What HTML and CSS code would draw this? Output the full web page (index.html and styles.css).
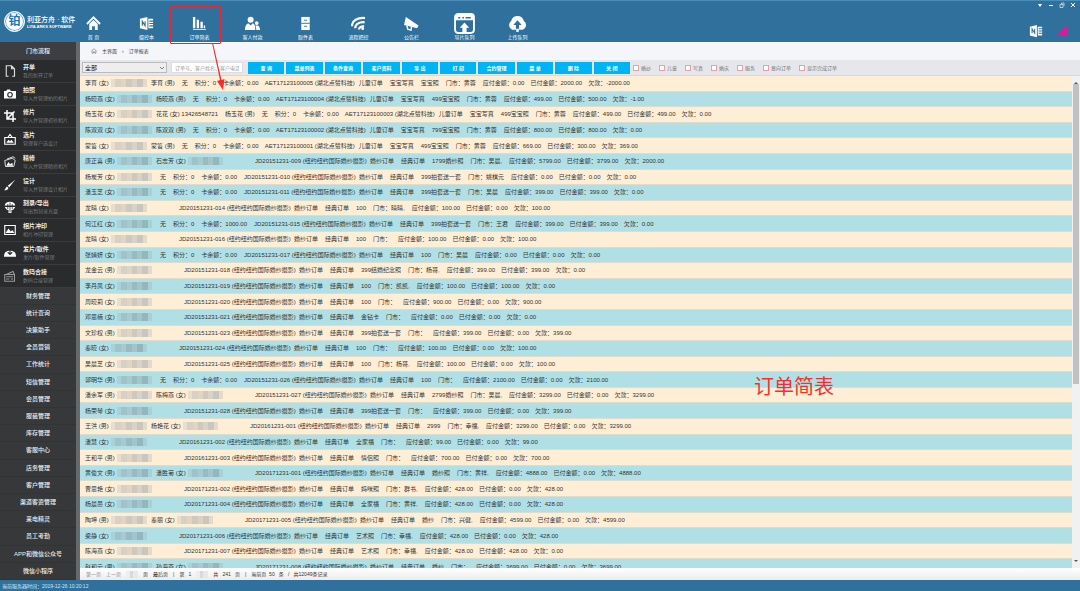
FILE: index.html
```html
<!DOCTYPE html>
<html lang="zh-CN">
<head>
<meta charset="utf-8">
<title>订单简表</title>
<link rel="stylesheet" href="styles.css">
</head>
<body>
<header class="topbar">
  <div class="brand">
    <span class="logo">铂</span>
    <div class="brand-text"><strong>利亚方舟 · 软件</strong><small>LIYA ARKS SOFTWARE</small></div>
  </div>
  <nav class="mainnav">
    <a href="#"><svg viewBox="0 0 16 16"><path d="M1 8.500 8 1.500l7 7" fill="none" stroke="#fff" stroke-width="2"/><path d="M3.500 8.500 8 4.200l4.500 4.300V15h-3v-4h-3v4h-3z" fill="#fff"/></svg>首 页</a>
    <a href="#"><svg viewBox="0 0 16 16"><path d="M1 3 9 1v14l-8-2zM10 3h5v10h-5z" fill="#fff"/><path d="M3.500 10.500v-5l3 5v-5M11 5.500h4M11 8h4M11 10.500h4" fill="none" stroke="#2f719c" stroke-width="1.200"/></svg>摄控本</a>
    <a href="#"><svg viewBox="0 0 16 16"><path d="M1 1h2.500v12H1zM5 4h2.500v9H5zM9 6h2.500v7H9zM12.500 10H14v3h-1.500zM1 14h14v1H1z" fill="#fff"/></svg>订单简表</a>
    <a href="#"><svg viewBox="0 0 16 16"><circle cx="6" cy="4" r="3.200" fill="#fff"/><path d="M0 15c0-5 2-7 4-7l2 2 2-2c2 0 3 2 3 7z" fill="#fff"/><circle cx="12.500" cy="7.500" r="2" fill="#fff"/><path d="M12 15c0-2-.3-3.500-1-5h2c2 0 3 2 3 5z" fill="#fff"/></svg>客人付款</a>
    <a href="#"><svg viewBox="0 0 16 16"><path d="M3.500 1h9v14h-9z" fill="#fff"/><path d="M3.500 7.800h9M6.500 4.500h3M6.500 11h3" stroke="#2f719c" stroke-width="1"/></svg>取件表</a>
    <a href="#"><svg viewBox="0 0 16 16"><g fill="none" stroke="#fff" stroke-width="2.400"><path d="M1 11C1 5 7 1.500 15 2.200M4.500 13c0-4 4-7 10-6.300M8.500 14.500c0-2 2-3.800 5.500-3.500"/></g><circle cx="12.500" cy="13.500" r="1.500" fill="#fff"/></svg>流程把控</a>
    <a href="#"><svg viewBox="0 0 16 16"><path d="M2 1 15.500 10l-1.500 3L0 9.500z" fill="#fff"/><path d="m3 10 1 4 3.500 1 .5-3.500" fill="none" stroke="#fff" stroke-width="1.500"/></svg>公告栏</a>
    <a href="#"><svg class="big" viewBox="0 0 20 20"><rect x="1" y="1" width="18" height="18" rx="3" fill="none" stroke="#fff" stroke-width="1.800"/><path d="M1 2h18v5H1zM10 9l4.500 5H12v5H8v-5H5.500z" fill="#fff"/><path d="M4 4.500h2M8 4.500h1.500M11 4.500h5" stroke="#2f719c" stroke-width="1.300"/></svg>导片队列</a>
    <a href="#"><svg class="big" viewBox="0 0 20 20"><path d="M5 16a5 5 0 0 1-1-8.500 6.200 6.200 0 0 1 12 0A4.800 4.800 0 0 1 15 16z" fill="#fff"/><path d="m10 7 4 4.500h-2.500V18h-3v-6.500H6z" fill="#2f719c"/><path d="M8.800 15h2.400v3H8.800z" fill="#fff"/></svg>上传队列</a>
  </nav>
  <div class="corner">
    <div class="window-buttons">
      <button aria-label="菜单"><svg viewBox="0 0 6 6"><path d="M1 2h4L3 5z" fill="#fff"/></svg></button>
      <button aria-label="最小化"><svg viewBox="0 0 6 6"><path d="M1 3.500h4" stroke="#fff"/></svg></button>
      <button aria-label="还原"><svg viewBox="0 0 6 6"><path d="M1 2.500h3v3H1zM2.500 2V1H5v3" fill="none" stroke="#cfe0ec" stroke-width=".8"/></svg></button>
      <button aria-label="关闭"><svg viewBox="0 0 6 6"><path d="m1 1 4 4m0-4L1 5" stroke="#fff"/></svg></button>
    </div>
    <div class="shortcuts">
      <a href="#" aria-label="笔记"><svg viewBox="0 0 16 16"><path d="M1 3 9 1v14l-8-2zM10 3h5v10h-5z" fill="#fff"/><path d="M3.500 10.500v-5l3 5v-5M11 5.500h4M11 8h4M11 10.500h4" fill="none" stroke="#2f719c" stroke-width="1.200"/></svg></a>
      <a href="#" aria-label="发送"><svg viewBox="0 0 16 16"><path d="M14 2 8 5 1 13l4-1 1 2 3-3 1 3 4-1-1-4z" fill="#e01a97"/></svg></a>
    </div>
  </div>
</header>

<div class="body">
  <aside class="sidebar">
    <h2>门市流程</h2>
    <ul class="steps">
      <li><a href="#"><svg viewBox="0 0 16 16"><path d="M6 15H3V1h7l4 4v10h-3M10 1v4h4" fill="none" stroke="#ddd" stroke-width="1.500"/></svg><span><b>开单</b><small>我的新开订单</small></span></a></li>
      <li><a href="#"><svg viewBox="0 0 16 16"><path d="M0 4h3l1-2h4l1 2h7v10H0z" fill="#fff"/><circle cx="8" cy="9" r="3" fill="none" stroke="#292b2d" stroke-width="1.500"/></svg><span><b>拍照</b><small>导入并管理拍的相片</small></span></a></li>
      <li><a href="#"><svg viewBox="0 0 16 16"><path d="M4 0v12h12M0 4h12v12M5 11l9-9" fill="none" stroke="#fff" stroke-width="2"/></svg><span><b>修片</b><small>导入并管理初修相片</small></span></a></li>
      <li><a href="#"><svg viewBox="0 0 16 16"><path d="M1 6h14v9H1zM5 6l3-4 3 4" fill="none" stroke="#fff" stroke-width="1.500"/><path d="m3 13 3-4 2 2 2-2 3 4z" fill="#fff"/></svg><span><b>选片</b><small>管理客户选设计</small></span></a></li>
      <li><a href="#"><svg viewBox="0 0 16 16"><path d="m1 6 10-3 4 3-2 8H2zM4 4l8-3 3 2" fill="none" stroke="#ddd" stroke-width="1.300"/><path d="m3 13 3-5 2 3 3-2 1 4z" fill="#fff"/></svg><span><b>精修</b><small>导入并管理精修相片</small></span></a></li>
      <li><a href="#"><svg viewBox="0 0 16 16"><path d="M15 1 7 11l-2-2zM4 10l2 2c-1 3-3 3-6 3 2-1 2-4 4-5z" fill="#fff"/></svg><span><b>设计</b><small>导入并管理设计相片</small></span></a></li>
      <li><a href="#"><svg viewBox="0 0 16 16"><path d="M1 6a7 5 0 0 1 14 0zM1 8h14l-3 4H4zM6 11h4v5H6z" fill="#fff"/><path d="M8 2v13M5 4v7M11 4v7" stroke="#292b2d"/></svg><span><b>刻录/导出</b><small>导出到刻录光盘</small></span></a></li>
      <li><a href="#"><svg viewBox="0 0 16 16"><path d="M1 2h14v12H1z" fill="none" stroke="#fff" stroke-width="1.500"/><path d="m2 12 4-6 3 4 2-2 3 4z" fill="#fff"/></svg><span><b>相片冲印</b><small>相片冲印管理</small></span></a></li>
      <li><a href="#"><svg viewBox="0 0 16 16"><path d="M0 13c0-6 3-8 8-8s8 2 8 8z" fill="#fff"/><path d="M8 3v7M5 7l3 3 3-3" fill="none" stroke="#292b2d" stroke-width="1.500"/></svg><span><b>发片/取件</b><small>发片/取件管理</small></span></a></li>
      <li><a href="#"><svg viewBox="0 0 16 16"><path d="M1 6h13v9H1zM3 6l9-4 2 4M3 9h9M3 12h4m2 0h3" fill="none" stroke="#999" stroke-width="1.400"/></svg><span><b>数码合接</b><small>数码合接管理</small></span></a></li>
    </ul>
    <ul class="links">
      <li><a href="#">财务管理</a></li><li><a href="#">统计查询</a></li><li><a href="#">决策助手</a></li><li><a href="#">全员营销</a></li><li><a href="#">工作统计</a></li><li><a href="#">短信管理</a></li><li><a href="#">会员管理</a></li><li><a href="#">服装管理</a></li><li><a href="#">库存管理</a></li><li><a href="#">客服中心</a></li><li><a href="#">店务管理</a></li><li><a href="#">客户管理</a></li><li><a href="#">渠道客资管理</a></li><li><a href="#">来电精灵</a></li><li><a href="#">员工考勤</a></li><li><a href="#">APP和微信公众号</a></li><li><a href="#">微信小程序</a></li>
    </ul>
  </aside>

  <main class="content">
    <nav class="crumbs"><svg viewBox="0 0 16 16"><path d="m1 8 7-6 7 6M3 7v7h3v-4h4v4h3V7" fill="none" stroke="#555" stroke-width="1.300"/></svg><a href="#">主界面</a><span>›</span><a href="#">订单报表</a></nav>
    <form class="toolbar">
      <div class="picker">
        <select aria-label="范围"><option>全部</option></select>
        <svg viewBox="0 0 6 6"><path d="m1 2 2 2 2-2" fill="none" stroke="#666" stroke-width=".8"/></svg>
      </div>
      <input type="text" aria-label="搜索" placeholder="订单号、客户姓名、客户电话">
      <div class="actions">
        <button type="button">查 询</button><button type="button">菜单列表</button><button type="button">条件查询</button><button type="button">客户资料</button><button type="button">导 出</button><button type="button">打 印</button><button type="button">合约管理</button><button type="button">菜 单</button><button type="button">删 除</button><button type="button">关 闭</button>
      </div>
      <div class="filters">
        <label><input type="checkbox">婚纱</label><label><input type="checkbox">儿童</label><label><input type="checkbox">写真</label><label><input type="checkbox">婚庆</label><label><input type="checkbox">服务</label><label><input type="checkbox">意向订单</label><label><input type="checkbox">显示完成订单</label>
      </div>
    </form>
    <div class="list">
      <ul class="orders">
        <li><span class="p2">李育 (女)<i></i></span><span>李育 (男)</span><span>无</span><span>积分：0</span><span class="m">卡余额：0.00</span><span class="aet">AET17123100005 (湖北点赞科技)</span><span>儿童订单</span><span>宝宝写真</span><span>宝宝照</span><span>门市：黄蓉</span><span class="m">应付金额：0.00</span><span class="m">已付金额：2000.00</span><span>欠款：-2000.00</span></li>
        <li><span class="p3">杨晓燕 (女)<i></i></span><span>杨晓燕 (男)</span><span>无</span><span>积分：0</span><span class="m">卡余额：0.00</span><span class="aet">AET17123100004 (湖北点赞科技)</span><span>儿童订单</span><span>宝宝写真</span><span>499宝宝照</span><span>门市：黄蓉</span><span class="m">应付金额：499.00</span><span class="m">已付金额：500.00</span><span>欠款：-1.00</span></li>
        <li><span class="p3">杨玉花 (女)<i></i></span><span>花花 (女) 13426548721</span><span>杨玉花 (男)</span><span>无</span><span>积分：0</span><span class="m">卡余额：0.00</span><span class="aet">AET17123100003 (湖北点赞科技)</span><span>儿童订单</span><span>宝宝写真</span><span>499宝宝照</span><span>门市：黄蓉</span><span class="m">应付金额：499.00</span><span class="m">已付金额：499.00</span><span>欠款：0.00</span></li>
        <li><span class="p3">陈双双 (女)<i></i></span><span>陈双双 (男)</span><span>无</span><span>积分：0</span><span class="m">卡余额：0.00</span><span class="aet">AET17123100002 (湖北点赞科技)</span><span>儿童订单</span><span>宝宝写真</span><span>799宝宝照</span><span>门市：黄蓉</span><span class="m">应付金额：800.00</span><span class="m">已付金额：800.00</span><span>欠款：0.00</span></li>
        <li><span class="p2">蒙笞 (女)<i></i></span><span>蒙笞 (男)</span><span>无</span><span>积分：0</span><span class="m">卡余额：0.00</span><span class="aet">AET17123100001 (湖北点赞科技)</span><span>儿童订单</span><span>宝宝写真</span><span>499宝宝照</span><span>门市：黄蓉</span><span class="m">应付金额：669.00</span><span class="m">已付金额：300.00</span><span>欠款：369.00</span></li>
        <li><span class="p3">唐正喜 (男)<i></i></span><span class="p3">石志芳 (女)<i></i></span><span class="jd far">JD20151231-009 (纽约纽约国际婚纱摄影)</span><span>婚纱订单</span><span>经典订单</span><span>1799婚纱照</span><span>门市：吴晨,</span><span class="m">应付金额：5799.00</span><span class="m">已付金额：3799.00</span><span>欠款：2000.00</span></li>
        <li><span class="p3">杨炭芳 (女)<i></i></span><span class="near">无</span><span>积分：0</span><span>卡余额：0.00</span><span class="jd">JD20151231-010 (纽约纽约国际婚纱摄影)</span><span>婚纱订单</span><span>经典订单</span><span>399拍套送一套</span><span>门市：姚棋元</span><span class="m">应付金额：0.00</span><span class="m">已付金额：0.00</span><span>欠款：0.00</span></li>
        <li><span class="p3">潘玉芝 (女)<i></i></span><span class="near">无</span><span>积分：0</span><span>卡余额：0.00</span><span class="jd">JD20151231-011 (纽约纽约国际婚纱摄影)</span><span>婚纱订单</span><span>经典订单</span><span>399拍套送一套</span><span>门市：吴晨</span><span class="m">应付金额：399.00</span><span class="m">已付金额：399.00</span><span>欠款：0.00</span></li>
        <li><span class="p2">龙晴 (女)<i></i></span><span class="jd far">JD20151231-014 (纽约纽约国际婚纱摄影)</span><span>婚纱订单</span><span>经典订单</span><span>100</span><span>门市：晴晴,</span><span class="m">应付金额：100.00</span><span class="m">已付金额：0.00</span><span>欠款：100.00</span></li>
        <li><span class="p3">何江红 (女)<i></i></span><span class="near">无</span><span>积分：0</span><span>卡余额：1000.00</span><span class="jd">JD20151231-015 (纽约纽约国际婚纱摄影)</span><span>婚纱订单</span><span>经典订单</span><span>399拍套送一套</span><span>门市：王君</span><span class="m">应付金额：399.00</span><span class="m">已付金额：399.00</span><span>欠款：0.00</span></li>
        <li><span class="p2">龙晴 (女)<i></i></span><span class="jd far">JD20151231-016 (纽约纽约国际婚纱摄影)</span><span>婚纱订单</span><span>经典订单</span><span>100</span><span>门市：</span><span class="m">应付金额：100.00</span><span class="m">已付金额：0.00</span><span>欠款：100.00</span></li>
        <li><span class="p3">张婧妍 (女)<i></i></span><span class="near">无</span><span>积分：0</span><span>卡余额：0.00</span><span class="jd">JD20151231-017 (纽约纽约国际婚纱摄影)</span><span>婚纱订单</span><span>经典订单</span><span>100</span><span>门市：吴晨</span><span class="m">应付金额：0.00</span><span class="m">已付金额：0.00</span><span>欠款：0.00</span></li>
        <li><span class="p3">龙金云 (男)<i></i></span><span class="jd far">JD20151231-018 (纽约纽约国际婚纱摄影)</span><span>婚纱订单</span><span>经典订单</span><span>399结婚纪念照</span><span>门市：杨哥,</span><span class="m">应付金额：399.00</span><span class="m">已付金额：399.00</span><span>欠款：0.00</span></li>
        <li><span class="p3">李丹凤 (女)<i></i></span><span class="jd far">JD20151231-019 (纽约纽约国际婚纱摄影)</span><span>婚纱订单</span><span>经典订单</span><span>100</span><span>门市：凯凯,</span><span class="m">应付金额：100.00</span><span class="m">已付金额：100.00</span><span>欠款：0.00</span></li>
        <li><span class="p3">周晓莉 (女)<i></i></span><span class="jd far">JD20151231-020 (纽约纽约国际婚纱摄影)</span><span>婚纱订单</span><span>经典订单</span><span>100</span><span>门市：</span><span class="m">应付金额：900.00</span><span class="m">已付金额：0.00</span><span>欠款：900.00</span></li>
        <li><span class="p3">邓思楠 (女)<i></i></span><span class="jd far">JD20151231-021 (纽约纽约国际婚纱摄影)</span><span>婚纱订单</span><span>经典订单</span><span>金钻卡</span><span>门市：</span><span class="m">应付金额：0.00</span><span class="m">已付金额：0.00</span><span>欠款：0.00</span></li>
        <li><span class="p3">文珍权 (男)<i></i></span><span class="jd far">JD20151231-023 (纽约纽约国际婚纱摄影)</span><span>婚纱订单</span><span>经典订单</span><span>399拍套送一套</span><span>门市：</span><span class="m">应付金额：399.00</span><span class="m">已付金额：0.00</span><span>欠款：399.00</span></li>
        <li><span class="p2">秦晓 (女)<i></i></span><span class="jd far">JD20151231-024 (纽约纽约国际婚纱摄影)</span><span>婚纱订单</span><span>经典订单</span><span>100</span><span>门市：</span><span class="m">应付金额：100.00</span><span class="m">已付金额：0.00</span><span>欠款：100.00</span></li>
        <li><span class="p3">吴晨芝 (女)<i></i></span><span class="jd far">JD20151231-025 (纽约纽约国际婚纱摄影)</span><span>婚纱订单</span><span>经典订单</span><span>100</span><span>门市：杨哥,</span><span class="m">应付金额：100.00</span><span class="m">已付金额：0.00</span><span>欠款：100.00</span></li>
        <li><span class="p3">郭明华 (男)<i></i></span><span class="near">无</span><span>积分：0</span><span>卡余额：0.00</span><span class="jd">JD20151231-026 (纽约纽约国际婚纱摄影)</span><span>婚纱订单</span><span>经典订单</span><span>100</span><span>门市：</span><span class="m">应付金额：2100.00</span><span class="m">已付金额：0.00</span><span>欠款：2100.00</span></li>
        <li><span class="p3">潘余军 (男)<i></i></span><span class="p3">陈梅燕 (女)<i></i></span><span class="jd far">JD20151231-027 (纽约纽约国际婚纱摄影)</span><span>婚纱订单</span><span>经典订单</span><span>2799婚纱照</span><span>门市：吴晨,</span><span class="m">应付金额：3299.00</span><span class="m">已付金额：0.00</span><span>欠款：3299.00</span></li>
        <li><span class="p3">杨荣琴 (女)<i></i></span><span class="jd far">JD20151231-028 (纽约纽约国际婚纱摄影)</span><span>婚纱订单</span><span>经典订单</span><span>399拍套送一套</span><span>门市：</span><span class="m">应付金额：399.00</span><span class="m">已付金额：0.00</span><span>欠款：399.00</span></li>
        <li><span class="p2">王洪 (男)<i></i></span><span class="p3">杨艳花 (女)<i></i></span><span class="jd far">JD20161231-001 (纽约纽约国际婚纱摄影)</span><span>婚纱订单</span><span>经典订单</span><span>2999</span><span>门市：幸福,</span><span class="m">应付金额：3299.00</span><span class="m">已付金额：0.00</span><span>欠款：3299.00</span></li>
        <li><span class="p2">潘慧 (女)<i></i></span><span class="jd far">JD20161231-002 (纽约纽约国际婚纱摄影)</span><span>婚纱订单</span><span>经典订单</span><span>全家福</span><span>门市：</span><span class="m">应付金额：99.00</span><span class="m">已付金额：0.00</span><span>欠款：99.00</span></li>
        <li><span class="p3">王和平 (男)<i></i></span><span class="jd far">JD20161231-003 (纽约纽约国际婚纱摄影)</span><span>婚纱订单</span><span>经典订单</span><span>情侣照</span><span>门市：</span><span class="m">应付金额：700.00</span><span class="m">已付金额：0.00</span><span>欠款：700.00</span></li>
        <li><span class="p3">黄俊文 (男)<i></i></span><span class="p3">潘胜菊 (女)<i></i></span><span class="jd far">JD20171231-001 (纽约纽约国际婚纱摄影)</span><span>婚纱订单</span><span>经典订单</span><span>婚纱照</span><span>门市：黄祥,</span><span class="m">应付金额：4888.00</span><span class="m">已付金额：0.00</span><span>欠款：4888.00</span></li>
        <li><span class="p3">曹思艳 (女)<i></i></span><span class="jd far">JD20171231-002 (纽约纽约国际婚纱摄影)</span><span>婚纱订单</span><span>经典订单</span><span>妈咪照</span><span>门市：群书,</span><span class="m">应付金额：428.00</span><span class="m">已付金额：0.00</span><span>欠款：428.00</span></li>
        <li><span class="p3">杨晨曼 (女)<i></i></span><span class="jd far">JD20171231-004 (纽约纽约国际婚纱摄影)</span><span>婚纱订单</span><span>经典订单</span><span>全家福</span><span>门市：黄祥,</span><span class="m">应付金额：428.00</span><span class="m">已付金额：0.00</span><span>欠款：428.00</span></li>
        <li><span class="p2">陶坤 (男)<i></i></span><span class="p2">秦丽 (女)<i></i></span><span class="jd far">JD20171231-005 (纽约纽约国际婚纱摄影)</span><span>婚纱订单</span><span>经典订单</span><span>婚纱</span><span>门市：兴健,</span><span class="m">应付金额：4599.00</span><span class="m">已付金额：0.00</span><span>欠款：4599.00</span></li>
        <li><span class="p2">梁静 (女)<i></i></span><span class="jd far">JD20171231-006 (纽约纽约国际婚纱摄影)</span><span>婚纱订单</span><span>经典订单</span><span>艺术照</span><span>门市：幸福,</span><span class="m">应付金额：428.00</span><span class="m">已付金额：0.00</span><span>欠款：428.00</span></li>
        <li><span class="p3">陈海燕 (女)<i></i></span><span class="jd far">JD20171231-007 (纽约纽约国际婚纱摄影)</span><span>婚纱订单</span><span>经典订单</span><span>艺术照</span><span>门市：幸福,</span><span class="m">应付金额：428.00</span><span class="m">已付金额：428.00</span><span>欠款：0.00</span></li>
        <li><span class="p3">赵和云 (男)<i></i></span><span class="p3">孙海燕 (女)<i></i></span><span class="jd far">JD20171231-008 (纽约纽约国际婚纱摄影)</span><span>婚纱订单</span><span>经典订单</span><span>婚纱</span><span>门市：</span><span class="m">应付金额：3699.00</span><span class="m">已付金额：0.00</span><span>欠款：3699.00</span></li>
      </ul>
      <div class="scrollbar"><span class="up"></span><span class="thumb"></span><span class="down"></span></div>
    </div>
    <div class="pager">
      <button disabled>第一页</button><button disabled>上一页</button><i></i><button>页</button><button>最后页</button><span>|</span><span>第 &nbsp; 1</span><i></i><span>共 &nbsp; 241 &nbsp; 页</span><span>|</span><span>当前页 &nbsp;50 &nbsp; 条 &nbsp; / &nbsp; 共12049条记录</span>
    </div>
  </main>
</div>
<footer class="status">当前服务器时间：2019-12-26 10:20:12</footer>

<div class="highlight"></div>
<svg class="arrow" viewBox="0 0 16 48"><path d="M1 0h1l8.500 37 3-1L12 47 6 38l3-1z" fill="#fb2a2a"/></svg>
<p class="caption">订单简表</p>
</body>
</html>
```

FILE: styles.css
```css
* { box-sizing: border-box; }
body {
  margin: 0;
  height: 100vh;
  display: flex;
  flex-direction: column;
  position: relative;
  overflow: hidden;
  font: 6px/8px "Liberation Sans", "Noto Sans CJK SC", sans-serif;
  color: #333;
}
ul, h2, p { margin: 0; padding: 0; list-style: none; }
a { color: inherit; text-decoration: none; }
button, input, select { font: inherit; margin: 0; padding: 0; border: 0; border-radius: 0; }
svg { display: block; flex: none; }

.topbar {
  display: flex;
  flex: none;
  height: 42px;
  background: #2f719c;
  border-top: 1px solid #4a8db8;
  color: #fff;
}
.brand { display: flex; align-items: center; gap: 2px; width: 67px; padding-left: 4px; white-space: nowrap; }
.logo {
  flex: none;
  width: 21px;
  height: 21px;
  border: 1px solid #fff;
  border-radius: 50%;
  background: #fff;
  box-shadow: inset 0 0 0 1px #5fb0e2;
  color: #1976b4;
  font-size: 12px;
  line-height: 18px;
  font-weight: bold;
  text-align: center;
}
.brand-text { display: flex; flex-direction: column; }
.brand-text strong { font-size: 7px; line-height: 9px; font-weight: 500; }
.brand-text small { font-size: 4px; line-height: 5px; font-weight: bold; }
.mainnav { display: flex; }
.mainnav a {
  width: 53px;
  padding-bottom: 1px;
  display: flex;
  flex-direction: column;
  align-items: center;
  justify-content: flex-end;
  gap: 3px;
  font-size: 5px;
  line-height: 7px;
}
.mainnav svg { width: 15px; height: 15px; }
.mainnav .big { width: 21px; height: 21px; margin-bottom: -3px; }
.corner { margin-left: auto; display: flex; flex-direction: column; align-items: flex-end; gap: 16px; padding: 1px 4px 0 0; }
.window-buttons { display: flex; gap: 5px; }
.window-buttons button { background: none; }
.window-buttons svg { width: 6px; height: 6px; }
.shortcuts { display: flex; gap: 13px; padding-right: 6px; }
.shortcuts svg { width: 14px; height: 14px; }

.body { flex: 1; min-height: 0; display: flex; }
.sidebar {
  flex: none;
  width: 80px;
  display: flex;
  flex-direction: column;
  background: #36383a;
  border-right: 4px solid #66696b;
  color: #eee;
}
.sidebar h2 { font-size: 6px; line-height: 18px; font-weight: 500; text-align: center; background: #3c3e41; }
.steps { flex: 7; min-height: 0; display: grid; grid-auto-rows: 1fr; background: #292b2d; }
.steps li { border-bottom: 1px solid #393b3d; min-height: 0; }
.steps a { display: flex; align-items: center; gap: 7px; height: 100%; padding-left: 4px; }
.steps svg { width: 12px; height: 12px; }
.steps b, .steps small { display: block; white-space: nowrap; }
.steps small { font-size: 5px; color: #77797b; }
.links { flex: 9; min-height: 0; display: grid; grid-auto-rows: 1fr; }
.links li { display: grid; align-items: center; text-align: center; font-weight: 500; min-height: 0; border-bottom: 1px solid #313335; }

.content { flex: 1; min-width: 0; display: flex; flex-direction: column; background: #f4f6f9; }
.crumbs { display: flex; align-items: center; gap: 5px; height: 18px; padding-left: 11px; font-size: 5px; color: #444; }
.crumbs svg { width: 6px; height: 6px; }
.toolbar {
  display: flex;
  align-items: center;
  height: 16px;
  padding-left: 2px;
  background: #e6e7ea;
  border-bottom: 1px solid #ddd8cc;
  font-size: 5px;
}
.picker { display: grid; align-items: center; width: 85px; margin-right: 4px; }
.picker select, .picker svg { grid-area: 1 / 1; }
.picker select { appearance: none; height: 11px; padding-left: 2px; border: 1px solid #bbb; background: #eee; font-size: 6px; color: #111; }
.picker svg { justify-self: end; width: 6px; height: 6px; margin-right: 2px; pointer-events: none; }
.toolbar > input { width: 72px; height: 11px; background: #fff; border: 1px solid #ddd; margin-right: 5px; padding: 0 3px; }
.toolbar > input::placeholder { color: #999; }
.actions { width: 382px; display: grid; grid-template-columns: repeat(10, 1fr); gap: 2px; }
.actions button { height: 12px; background: #00b4f4; color: #fff; font-weight: bold; white-space: nowrap; }
.filters { display: flex; gap: 8px; padding-left: 3px; color: #777; }
.filters label { display: flex; align-items: center; gap: 2px; white-space: nowrap; }
.filters input { appearance: none; width: 6px; height: 6px; background: #fff; border: 1px solid #e9a0ad; }

.list { flex: 1; min-height: 0; display: flex; overflow: hidden; }
.orders { flex: 1; min-width: 0; display: grid; grid-auto-rows: 1fr; margin-bottom: -7px; }
.orders li {
  display: flex;
  align-items: center;
  min-height: 0;
  padding-left: 5px;
  border-bottom: 1px solid #dcdccf;
  background: #ffeed6;
  white-space: nowrap;
  overflow: hidden;
}
.orders li:nth-child(even) { background: #b0dfe5; }
.orders span { flex: none; margin-right: 7px; }
.orders .m { margin-right: 6px; }
.orders .aet { width: 94px; margin-right: 0; }
.orders .jd { width: 115px; margin-right: 0; }
.orders .far { margin-left: 28px; }
.orders .near { margin-left: 4px; }
.orders .p2, .orders .p3 { display: flex; align-items: center; gap: 2px; width: 66px; margin-right: 0; }
.orders .p3 { width: 71px; }
.orders i {
  flex: 1;
  height: 8px;
  margin-right: 4px;
  background: linear-gradient(90deg, #e9ddcd 0 12%, #d9d0c5 12% 28%, #e0d4c4 28% 42%, #cfc8bf 42% 58%, #d9d2c9 58% 72%, #c9c6c0 72% 88%, #e3dacb 88%);
}
.orders li:nth-child(even) i {
  background: linear-gradient(90deg, #a9d2d8 0 12%, #9ec3ca 12% 28%, #a8cacf 28% 42%, #98bac2 42% 58%, #a4c4ca 58% 72%, #94b6bd 72% 88%, #a9d0d6 88%);
}
.scrollbar { flex: none; width: 8px; display: flex; flex-direction: column; align-items: center; background: #f1f1f1; }
.up, .down { height: 8px; border: 2px solid transparent; }
.up { border-bottom-color: #555; border-top-width: 0; }
.down { border-top-color: #555; border-bottom-width: 0; margin-top: auto; }
.thumb { width: 6px; height: 61%; background: #c1c1c1; }

.pager {
  display: flex;
  align-items: center;
  gap: 5px;
  height: 12px;
  padding-left: 6px;
  background: linear-gradient(#fff, #ececec);
  font-size: 5px;
  white-space: nowrap;
}
.pager button { background: none; color: #222; }
.pager button:disabled { color: #888; }
.pager i { width: 12px; height: 7px; background: linear-gradient(90deg, #eee 0 30%, #d9d9d9 30% 60%, #e8e8e8 60%); }
.status { flex: none; height: 11px; padding-left: 2px; background: #2f719c; color: #d5e5ef; font-size: 5px; line-height: 13px; }

.highlight { position: absolute; left: 170px; top: 6px; width: 51px; height: 38px; border: 1px solid #e8263a; border-radius: 1px; }
.arrow { position: absolute; left: 211px; top: 43px; width: 16px; height: 48px; }
.caption { position: absolute; left: 754px; top: 375px; font-size: 20px; line-height: 24px; color: #f5302c; }
```
